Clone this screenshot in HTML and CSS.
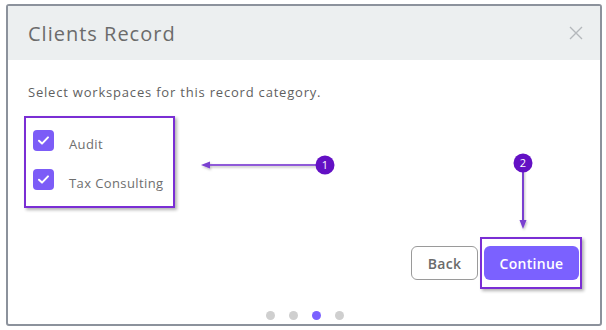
FILE: index.html
```html
<!DOCTYPE html>
<html lang="en">
<head>
    <meta charset="UTF-8">
    <meta name="viewport" content="width=device-width, initial-scale=1.0">
    <title>Clients Record</title>
    <link rel="stylesheet" href="styles.css">
</head>
<body>

<!-- Modal -->
<div class="modal">
    <div class="modal-header">
        <h1>Clients Record</h1>
        <svg class="close" width="14" height="14" viewBox="0 0 14 14">
            <path d="M1 1L13 13M13 1L1 13" stroke="#b4b8bc" stroke-width="1.4" fill="none"/>
        </svg>
    </div>

    <div class="modal-body">
        <p class="hint">Select workspaces for this record category.</p>

        <div class="checklist">
            <label class="check-row">
                <span class="checkbox">
                    <svg width="21" height="21" viewBox="0 0 21 21"><path d="M6 10.8L9 13.6L15 7.4" stroke="#fff" stroke-width="2" fill="none" stroke-linecap="round" stroke-linejoin="round"/></svg>
                </span>
                <span class="label-text">Audit</span>
            </label>
            <label class="check-row">
                <span class="checkbox">
                    <svg width="21" height="21" viewBox="0 0 21 21"><path d="M6 10.8L9 13.6L15 7.4" stroke="#fff" stroke-width="2" fill="none" stroke-linecap="round" stroke-linejoin="round"/></svg>
                </span>
                <span class="label-text">Tax Consulting</span>
            </label>
        </div>

        <div class="buttons">
            <button class="btn-back">Back</button>
            <div class="highlight">
                <button class="btn-continue">Continue</button>
            </div>
        </div>

        <div class="dots">
            <span class="dot"></span>
            <span class="dot"></span>
            <span class="dot active"></span>
            <span class="dot"></span>
        </div>
    </div>
</div>

<!-- Annotation arrows and step badges -->
<svg class="annotations" width="606" height="330" viewBox="0 0 606 330">
    <defs>
        <filter id="soft" x="-20%" y="-20%" width="140%" height="140%">
            <feDropShadow dx="1" dy="1.5" stdDeviation="1" flood-color="#000" flood-opacity="0.25"/>
        </filter>
    </defs>
    <g filter="url(#soft)">
        <line x1="208" y1="165" x2="318" y2="165" stroke="#8f5ad8" stroke-width="2"/>
        <path d="M201 165L210 161.5L210 168.5Z" fill="#7a3fd0"/>
        <line x1="523" y1="170" x2="523" y2="222" stroke="#7a3fd0" stroke-width="2"/>
        <path d="M523 229L519.5 220L526.5 220Z" fill="#7a3fd0"/>
    </g>
    <circle cx="325" cy="165" r="9.5" fill="#6310c4"/>
    <text x="325" y="169" class="badge-num">1</text>
    <circle cx="523" cy="163" r="9.5" fill="#6310c4"/>
    <text x="523" y="167" class="badge-num">2</text>
</svg>

</body>
</html>
```

FILE: styles.css
```css
body {
    font-family: "Open Sans", Arial, sans-serif;
    margin: 0;
    padding: 0;
    background-color: #fff;
    width: 606px;
    height: 330px;
    overflow: hidden;
    position: relative;
}

.modal {
    box-sizing: border-box;
    width: 596px;
    height: 322px;
    margin: 4px 0 0 6px;
    border: 2px solid #8c929c;
    border-radius: 3px;
    background-color: #fff;
}

.modal-header {
    height: 54px;
    display: flex;
    align-items: center;
    justify-content: space-between;
    background-color: #eceff0;
    padding: 0 17px 0 20px;
}

.modal-header h1 {
    margin: 0;
    font-size: 20px;
    font-weight: 400;
    color: #6b6b6b;
    letter-spacing: 1px;
}

.close {
    display: block;
}

.modal-body {
    padding: 0 21px 0 20px;
}

.hint {
    margin: 24px 0 0;
    font-size: 13px;
    line-height: 16px;
    color: #5f5f5f;
    letter-spacing: 0.8px;
}

.checklist {
    box-sizing: border-box;
    width: 151px;
    height: 92px;
    margin: 16px 0 0 -4px;
    padding: 12px 0 0 7px;
    border: 2px solid #7a2ed4;
    box-shadow: 2px 2px 3px rgba(0, 0, 0, 0.3);
    display: flex;
    flex-direction: column;
    gap: 18px;
}

.check-row {
    display: flex;
    align-items: center;
    gap: 15px;
    font-size: 13px;
    color: #6e6e6e;
    height: 21px;
    letter-spacing: 0.4px;
}

.label-text {
    padding-top: 7px;
}

.checkbox {
    width: 21px;
    height: 21px;
    border-radius: 4px;
    background-color: #7c5cf7;
}

.checkbox svg {
    display: block;
}

.buttons {
    display: flex;
    justify-content: flex-end;
    align-items: center;
    gap: 2px;
    margin-top: 29px;
}

.buttons button {
    font-family: "Open Sans", Arial, sans-serif;
    font-size: 14px;
    font-weight: 600;
    height: 34px;
    border-radius: 6px;
    cursor: pointer;
    letter-spacing: 0.3px;
}

.btn-back {
    width: 67px;
    background-color: #fff;
    border: 1px solid #9a9a9a;
    color: #6b6b6b;
}

.highlight {
    padding: 7px 1px 7px 2px;
    border: 2px solid #7a2ed4;
    box-shadow: 2px 2px 3px rgba(0, 0, 0, 0.3);
    margin-right: -3px;
}

.btn-continue {
    display: block;
    width: 95px;
    border: none;
    background-color: #7b61ff;
    color: #fff;
}

.dots {
    display: flex;
    justify-content: center;
    gap: 14px;
    margin-top: 22px;
    padding-left: 2px;
}

.dot {
    width: 9px;
    height: 9px;
    border-radius: 50%;
    background-color: #cfcfcf;
}

.dot.active {
    background-color: #7b61ff;
}

.annotations {
    position: absolute;
    top: 0;
    left: 0;
    pointer-events: none;
}

.badge-num {
    font-family: "Open Sans", Arial, sans-serif;
    font-size: 11px;
    fill: #fff;
    text-anchor: middle;
}
```
